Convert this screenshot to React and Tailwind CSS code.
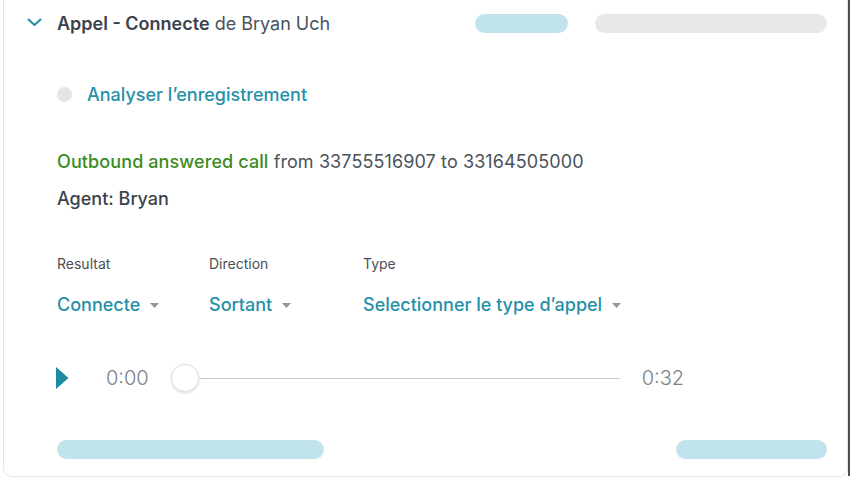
import React from "react";

const Caret = () => (
  <svg width="9" height="5" viewBox="0 0 9 5" className="ml-[10px] mt-[2px]">
    <path d="M0 0 L9 0 L4.5 5 Z" fill="#8e969e" />
  </svg>
);

export default function App() {
  return (
    <div
      className="relative w-[853px] h-[479px] bg-white overflow-hidden"
      style={{ fontFamily: "Inter, 'Noto Sans', sans-serif" }}
    >
      <div className="ml-[3px] w-[845px] h-[477px] border-x border-b border-[#e2e5e8] rounded-b-[9px] flex flex-col">
        {/* header */}
        <div className="flex items-center mt-[14px] h-[19px]">
          <svg width="15" height="9" viewBox="0 0 15 9" className="ml-[23px] mt-[-2px]">
            <path d="M1.5 1.5 L7.5 7 L13.5 1.5" fill="none" stroke="#1f8ea6" strokeWidth="2" strokeLinecap="round" strokeLinejoin="round" />
          </svg>
          <div className="ml-[15px] text-[18px] text-[#3a424c] leading-none whitespace-nowrap">
            <span className="font-semibold">Appel - Connecte</span>{" "}
            <span className="font-normal text-[#4a525b]">de Bryan Uch</span>
          </div>
          <div className="ml-auto w-[93px] h-[19px] rounded-full bg-[#c1e3eb]" />
          <div className="ml-[27px] mr-[20px] w-[232px] h-[19px] rounded-full bg-[#e6e8ea]" />
        </div>

        {/* analyser */}
        <div className="flex items-center mt-[49px] h-[24px] ml-[53px]">
          <div className="w-[15px] h-[15px] rounded-full bg-[#e3e5e8]" />
          <span className="ml-[15px] text-[18px] font-medium text-[#2590a8]">
            Analyser l’enregistrement
          </span>
        </div>

        {/* outbound */}
        <div className="mt-[44px] h-[24px] leading-[24px] ml-[53px] text-[18px] tracking-[0.1px] text-[#4a525a] whitespace-nowrap">
          <span className="font-medium text-[#3a8c22]">Outbound answered call</span> from 33755516907 to 33164505000
        </div>
        <div className="mt-[13px] h-[24px] leading-[24px] ml-[53px] text-[18px] font-medium text-[#3a424c]">
          Agent: Bryan
        </div>

        {/* labels */}
        <div className="flex mt-[43px] h-[20px] leading-[20px] ml-[53px] text-[14px] text-[#4a4f55]">
          <div className="w-[152px]">Resultat</div>
          <div className="w-[154px]">Direction</div>
          <div>Type</div>
        </div>
        <div className="flex mt-[18px] h-[24px] ml-[53px] text-[18px] font-medium text-[#2590a8] whitespace-nowrap">
          <div className="w-[152px] flex items-center">
            Connecte <Caret />
          </div>
          <div className="w-[154px] flex items-center">
            Sortant <Caret />
          </div>
          <div className="flex items-center">
            Selectionner le type d’appel <Caret />
          </div>
        </div>

        {/* player */}
        <div className="flex items-center mt-[48px] h-[28px] ml-[52px]">
          <svg width="13" height="22" viewBox="0 0 13 22">
            <path d="M0 0 L12.5 11 L0 22 Z" fill="#1c8aa2" />
          </svg>
          <span className="ml-[37px] text-[20px] font-light text-[#7b8289]">0:00</span>
          <div className="ml-[22px] w-[28px] h-[28px] rounded-full bg-white border border-[#dfe2e5] shadow-[0_1px_3px_rgba(0,0,0,0.15)] shrink-0" />
          <div className="w-[421px] h-px bg-[#c5cbd0]" />
          <span className="ml-[22px] text-[20px] font-light text-[#7b8289]">0:32</span>
        </div>

        {/* bottom pills */}
        <div className="flex mt-[48px] ml-[53px] mr-[20px]">
          <div className="w-[267px] h-[19px] rounded-full bg-[#c1e3eb]" />
          <div className="ml-auto w-[151px] h-[19px] rounded-full bg-[#c1e3eb]" />
        </div>
      </div>
      <div className="absolute left-[848px] top-0 w-[2px] h-[476px] bg-[#4a4d50]" />
    </div>
  );
}
